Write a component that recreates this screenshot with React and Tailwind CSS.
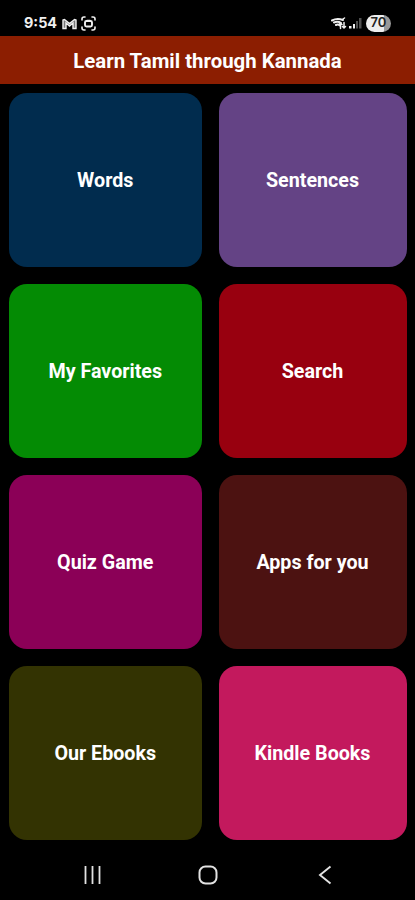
const tiles = [
  ["Words", "bg-[#012c4e]"],
  ["Sentences", "bg-[#644385]"],
  ["My Favorites", "bg-[#048b04]"],
  ["Search", "bg-[#98000f]"],
  ["Quiz Game", "bg-[#8b0057]"],
  ["Apps for you", "bg-[#4c1211]"],
  ["Our Ebooks", "bg-[#333302]"],
  ["Kindle Books", "bg-[#c3195d]"],
];

function StatusBar() {
  return (
    <div className="flex h-9 items-start justify-between px-6 pt-[14px] text-[#f0f0f0]">
      <div className="flex h-[18px] items-center">
        <span className="w-[33px] whitespace-nowrap font-['Inter',sans-serif] text-[14.4px] leading-[18px] font-bold">9:54</span>
        <svg className="ml-[5px] mt-px" width="15" height="12" viewBox="0 0 15 12" fill="none" stroke="currentColor" strokeWidth="1.4">
          <path d="M1 10.5V2l1.500-.5L7.500 5.500 12.500 1.500 14 2v8.500h-3V5L7.500 8 4 5v5.500z" fill="#777" />
        </svg>
        <svg className="ml-[4px]" width="15" height="15" viewBox="0 0 15 15" fill="none" stroke="currentColor" strokeWidth="1.600" strokeLinecap="round">
          <path d="M1 4V3q0-2 2-2h1M11 1h1q2 0 2 2v1M14 11v1q0 2-2 2h-1M4 14H3q-2 0-2-2v-1" />
          <rect x="4" y="5" width="7" height="5.500" rx="1.500" strokeWidth="1.900" />
          <path d="M6 4.500h3" />
        </svg>
      </div>
      <div className="flex h-[18px] items-center">
        <svg width="16" height="13" viewBox="0 0 16 13" fill="none" stroke="currentColor" strokeLinecap="round">
          <path d="M1 3.500q5-2.500 11-.5M3 5.500q4-1.500 7 .5M5 8q2-1 4 .5" strokeWidth="2" />
          <path d="M9.500 11.500V6M8 7.500 9.500 6 11 7.500M13 5.500v5.500M11.500 9.500 13 11l1.500-1.500M12 2l1.500-1" strokeWidth="1.500" />
        </svg>
        <svg className="ml-[2px]" width="13" height="12" viewBox="0 0 13 12" fill="currentColor">
          <path d="M0 9h2.500v2.500H0zM4 7h2v4.500H4z" />
          <path d="M7 4h2v7.500H7zM10 1h2.500v10.500H10z" fill="#505050" />
        </svg>
        <span className="ml-[4px] flex h-[17px] w-[25px] items-center justify-center rounded-full bg-[linear-gradient(90deg,#eee_70%,#999_70%)] font-['Inter',sans-serif] text-[13px] font-semibold text-[#222]">70</span>
      </div>
    </div>
  );
}

export default function App() {
  return (
    <div className="flex h-[900px] w-[415px] flex-col overflow-hidden bg-black font-['Roboto',sans-serif] text-white">
      <StatusBar />
      <header className="flex h-12 shrink-0 items-center justify-center bg-[#8c1e01] pt-0.5 text-[20.4px] font-bold">
        Learn Tamil through Kannada
      </header>
      <main className="mt-[9px] grid h-[747px] shrink-0 grid-cols-[192.5px_188px] grid-rows-4 gap-x-[17px] gap-y-[17.5px] pl-[9px]">
        {tiles.map(([label, color]) => (
          <button key={label} className={`flex items-center justify-center rounded-[18px] pt-0.5 text-[19.7px] font-bold ${color}`}>
            {label}
          </button>
        ))}
      </main>
      <nav className="grid h-[60px] grid-cols-[184px_48px_183px] items-center text-[#e2e2e2]">
        <svg className="ml-[84px] mt-[9px]" width="18" height="20" viewBox="0 0 18 20" stroke="currentColor" strokeWidth="1.8">
          <path d="M1.500 1v18M8.500 1v18M15.500 1v18" />
        </svg>
        <svg className="mx-auto mt-[9px]" width="20" height="20" viewBox="0 0 20 20" fill="none" stroke="currentColor" strokeWidth="2">
          <rect x="1.500" y="1.500" width="17" height="17" rx="6" />
        </svg>
        <svg className="ml-[86px] mt-[9px]" width="14" height="20" viewBox="0 0 14 20" fill="none" stroke="currentColor" strokeWidth="1.9">
          <path d="M12.500 1.500 2 10l10.500 8.500" />
        </svg>
      </nav>
    </div>
  );
}
